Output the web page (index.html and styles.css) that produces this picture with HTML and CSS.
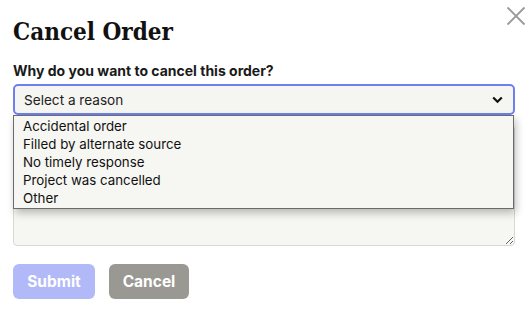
FILE: index.html
```html
<!DOCTYPE html>
<html>
<head>
<meta charset="utf-8">
<link rel="stylesheet" href="styles.css">
</head>
<body>
<div class="modal">
  <button class="close" aria-label="Close">
    <svg width="20" height="20" viewBox="0 0 20 20"><path d="M1.5 1.5 L18.5 18.5 M18.5 1.5 L1.5 18.5" stroke="#9a9a9a" stroke-width="1.8" fill="none"/></svg>
  </button>
  <h1 class="title">Cancel Order</h1>
  <form class="form">
    <label class="label">Why do you want to cancel this order?</label>
    <div class="field">
      <div class="select">
        <span>Select a reason</span>
        <svg class="chev" width="11" height="8" viewBox="0 0 11 8"><path d="M1.2 1.5 L5.5 5.8 L9.8 1.5" stroke="#111" stroke-width="2.2" fill="none"/></svg>
      </div>
      <ul class="options">
        <li>Accidental order</li>
        <li>Filled by alternate source</li>
        <li>No timely response</li>
        <li>Project was cancelled</li>
        <li>Other</li>
      </ul>
      <textarea class="text"></textarea>
    </div>
    <div class="actions">
      <button type="button" class="btn submit">Submit</button>
      <button type="button" class="btn cancel">Cancel</button>
    </div>
  </form>
</div>
</body>
</html>
```

FILE: styles.css
```css
html, body {
  margin: 0;
  padding: 0;
  background: #fff;
}
.modal {
  position: relative;
  padding: 15px 15px 0 13px;
  font-family: Inter, "Noto Sans", sans-serif;
  color: #111;
}
.close {
  position: absolute;
  top: 6px;
  right: 4px;
  border: 0;
  background: none;
  padding: 0;
  width: 20px;
  height: 20px;
}
.title {
  margin: 0;
  font-family: "DejaVu Serif Condensed", "DejaVu Serif", Georgia, serif;
  font-stretch: condensed;
  font-weight: bold;
  font-size: 24px;
  line-height: 34px;
}
.form {
  margin-top: 13px;
}
.label {
  display: block;
  font-weight: 700;
  font-size: 14px;
  line-height: 18px;
  color: #1a1a1a;
  margin-bottom: 4px;
}
.field {
  position: relative;
}
.select {
  box-sizing: border-box;
  height: 31px;
  width: 502px;
  border: 2px solid #6f80ee;
  border-radius: 5px;
  background: #f5f5f1;
  display: flex;
  align-items: center;
  justify-content: space-between;
  padding: 0 10px 0 9px;
  font-size: 13.6px;
  color: #222;
}
.chev {
  display: block;
}
.options {
  position: absolute;
  top: 31px;
  left: 0;
  width: 501px;
  box-sizing: border-box;
  margin: 0;
  padding: 1px 0 1px;
  list-style: none;
  background: #f6f6f2;
  border: 1px solid #6b6b6b;
  box-shadow: 2px 4px 8px rgba(0, 0, 0, 0.25);
  z-index: 2;
}
.options li {
  font-size: 13.3px;
  line-height: 18px;
  padding-left: 9px;
  color: #111;
}
.text {
  display: block;
  box-sizing: border-box;
  margin-top: 10px;
  width: 502px;
  height: 121px;
  background: #f6f6f2;
  border: 1px solid #d9d9d4;
  border-radius: 4px;
  resize: vertical;
}
.actions {
  display: flex;
  gap: 14px;
  margin-top: 18px;
}
.btn {
  border: 0;
  border-radius: 6px;
  height: 35px;
  padding: 0 10px;
  font-family: Inter, "Noto Sans", sans-serif;
  font-weight: 700;
  font-size: 15.5px;
  color: #fff;
}
.submit {
  width: 82px;
  background: #b2b9f8;
}
.cancel {
  width: 80px;
  background: #9a9893;
}
```
